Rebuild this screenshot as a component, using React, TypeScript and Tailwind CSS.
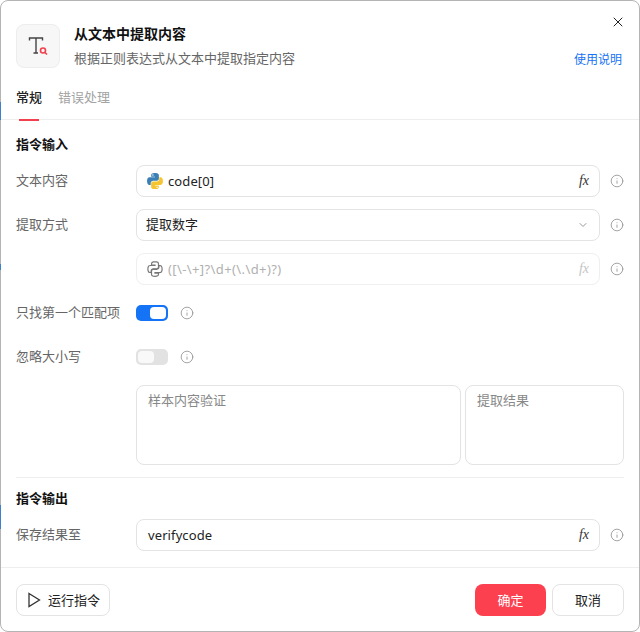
import { ChevronDown, Info, X } from 'lucide-react'
import React from 'react'

const font = "font-['Noto_Sans_CJK_SC','Noto_Sans',sans-serif]"

const snake = 'M54.9 0C50.3 0 45.9.4 42.1 1.1 30.8 3.1 28.8 7.3 28.8 14.9V25H55.3V28.4H18.8C11.1 28.4 4.4 33 2.3 41.7-.1 51.7-.2 58 2.3 68.4 4.2 76.2 8.6 81.7 16.3 81.7H25.4V69.7C25.4 61 32.9 53.3 41.8 53.3H68.3C75.7 53.3 81.6 47.2 81.6 39.9V14.9C81.6 7.8 75.6 2.4 68.3 1.1 63.7.4 58.9 0 54.9 0Z'
const eye = 'M40.6 8.1a5 5 0 1 1 0 10 5 5 0 1 1 0-10Z'

const PythonLogo = () => (
  <svg viewBox="0 0 110 110" className="h-[16px] w-[16px] shrink-0">
    <path d={snake + eye} fill="#3a7fb5" fillRule="evenodd" />
    <path d={snake + eye} fill="#f5c531" fillRule="evenodd" transform="rotate(180 55 55.5)" />
  </svg>
)

const PythonOutline = () => (
  <svg viewBox="-6 -6 122 122" className="h-[16px] w-[16px] shrink-0" fill="none" stroke="#777" strokeWidth="9">
    <path d={snake} />
    <path d={snake} transform="rotate(180 55 55.5)" />
  </svg>
)

const Fx = ({ dim }: { dim?: boolean }) => (
  <span className={`font-['Liberation_Serif',serif] text-[14px] italic leading-none ${dim ? 'text-[#c4c4c4]' : 'text-[#333]'}`}>fx</span>
)

const Hint = () => <Info size={14} strokeWidth={1.4} className="shrink-0 text-[#909090]" />

const Row = ({ label, children, hint = true }: { label?: string; children: React.ReactNode; hint?: boolean }) => (
  <div className="flex h-8 items-center">
    <div className="mb-[2px] w-[120px] shrink-0 text-[13px] text-[#666]">{label}</div>
    <div className="min-w-0 flex-1">{children}</div>
    {hint && <div className="flex w-6 shrink-0 justify-end"><Hint /></div>}
  </div>
)

const Field = ({ children, disabled }: { children: React.ReactNode; disabled?: boolean }) => (
  <div className={`flex h-8 items-center rounded-lg border px-[10px] text-[13px] ${disabled ? 'border-[#efefef] text-[#b0b0b0]' : 'border-[#e3e3e3] text-[#222]'}`}>
    {children}
  </div>
)

const Toggle = ({ on }: { on?: boolean }) => (
  <div className={`flex h-4 w-8 items-center rounded-[5px] p-[2px] ${on ? 'justify-end bg-[#1573f5]' : 'justify-start bg-[#e2e2e2]'}`}>
    <div className={`h-3 w-4 rounded-[4px] ${on ? 'bg-white' : 'bg-[#f9f9f9]'}`} />
  </div>
)

export default function App() {
  return (
    <div className={`relative h-[632px] w-[640px] overflow-hidden bg-white ${font}`}>
      <div className="flex h-full flex-col rounded-lg border border-[#b4b4b4] bg-white">
        <div className="relative flex h-[89px] shrink-0 px-[15px] pt-[23px]">
          <div className="flex h-11 w-11 items-center justify-center rounded-lg border border-[#ededed] bg-[#f7f7f7]">
            <svg viewBox="0 0 24 24" className="h-6 w-6">
              <path d="M3.5 6.5V4h13v2.500M10 4v15M7.500 19H12" fill="none" stroke="#444" strokeWidth="1.400" />
              <circle cx="17" cy="16.500" r="2.500" fill="none" stroke="#f2404f" strokeWidth="1.600" />
              <path d="M19 18.500l2 2" stroke="#f2404f" strokeWidth="1.600" />
            </svg>
          </div>
          <div className="ml-[14px] flex flex-col">
            <div className="mt-[-1px] text-[14px] leading-5 font-bold text-[#111]">从文本中提取内容</div>
            <div className="mt-[5px] text-[13px] leading-5 text-[#666]">根据正则表达式从文本中提取指定内容</div>
          </div>
          <div className="absolute top-[48px] right-[17px] text-[12px] leading-5 text-[#1573f5]">使用说明</div>
          <X size={16} strokeWidth={1.5} className="absolute top-[13px] right-[13px] text-[#222]" />
        </div>

        <div className="flex h-[30px] shrink-0 gap-4 border-b border-[#eeeeee] px-[15px] text-[13px]">
          <div className="relative h-[30px] leading-[14px] font-medium text-[#222]">
            常规
            <div className="absolute right-[3px] bottom-[-1px] left-[3px] h-[2px] bg-[#f2404f]" />
          </div>
          <div className="leading-[14px] text-[#a3a3a3]">错误处理</div>
        </div>

        <div className="flex flex-1 flex-col gap-3 px-[15px] pt-[14px]">
          <div className="mb-[-1px] text-[13px] leading-5 font-bold text-[#111]">指令输入</div>
          <Row label="文本内容">
            <Field>
              <PythonLogo />
              <span className="ml-[5px] flex-1 pt-[1px] font-['Noto_Sans',sans-serif] tracking-[0.1px]">code[0]</span>
              <Fx />
            </Field>
          </Row>
          <Row label="提取方式">
            <Field>
              <span className="ml-[-1px] flex-1 pb-[2px]">提取数字</span>
              <ChevronDown size={12} className="text-[#999]" />
            </Field>
          </Row>
          <Row>
            <Field disabled>
              <PythonOutline />
              <span className="ml-[5px] flex-1 pt-[1px] font-['Noto_Sans',sans-serif] tracking-[0.4px]">{'([\\-\\+]?\\d+(\\.\\d+)?)'}</span>
              <Fx dim />
            </Field>
          </Row>
          <Row label="只找第一个匹配项" hint={false}>
            <div className="flex items-center gap-3">
              <Toggle on />
              <Hint />
            </div>
          </Row>
          <Row label="忽略大小写" hint={false}>
            <div className="flex items-center gap-3">
              <Toggle />
              <Hint />
            </div>
          </Row>
          <div className="flex gap-1 pl-[120px]">
            <div className="h-20 flex-1 rounded-lg border border-[#e3e3e3] px-[11px] py-[4px] text-[13px] text-[#888]">样本内容验证</div>
            <div className="h-20 w-[159px] rounded-lg border border-[#e3e3e3] px-[11px] py-[4px] text-[13px] text-[#888]">提取结果</div>
          </div>
          <div className="h-px bg-[#eeeeee]" />
          <div className="mb-[-1px] mt-[-2px] text-[13px] leading-5 font-bold text-[#111]">指令输出</div>
          <Row label="保存结果至">
            <Field>
              <span className="flex-1 pl-[1px] pt-[1px] font-['Noto_Sans',sans-serif] tracking-[0.1px]">verifycode</span>
              <Fx />
            </Field>
          </Row>
        </div>

        <div className="flex h-[64px] shrink-0 items-center justify-between border-t border-[#eeeeee] px-[15px] pt-[1px]">
          <button className="flex h-8 w-[94px] items-center justify-center gap-[6px] rounded-lg border border-[#e3e3e3] text-[13px] text-[#222]">
            <svg viewBox="0 0 16 16" className="h-4 w-4" fill="none" stroke="#333" strokeWidth="1.300">
              <path d="M3 1.500L13.500 8 3 14.500Z" strokeLinejoin="miter" />
            </svg>
            运行指令
          </button>
          <div className="flex gap-[6px]">
            <button className="h-8 w-[71px] rounded-lg bg-[#fd4050] text-[13px] text-white">确定</button>
            <button className="h-8 w-[72px] rounded-lg border border-[#e3e3e3] text-[13px] text-[#222]">取消</button>
          </div>
        </div>
      </div>
      {/* bits of the window behind showing at the left edge */}
      <div className="absolute top-[102px] left-0 h-[18px] w-px bg-[#3f7fd0]" />
      <div className="absolute top-[264px] left-0 h-[6px] w-px bg-[#3f7fd0]" />
      <div className="absolute top-[505px] left-0 h-[24px] w-px bg-[#3f7fd0]" />
    </div>
  )
}
